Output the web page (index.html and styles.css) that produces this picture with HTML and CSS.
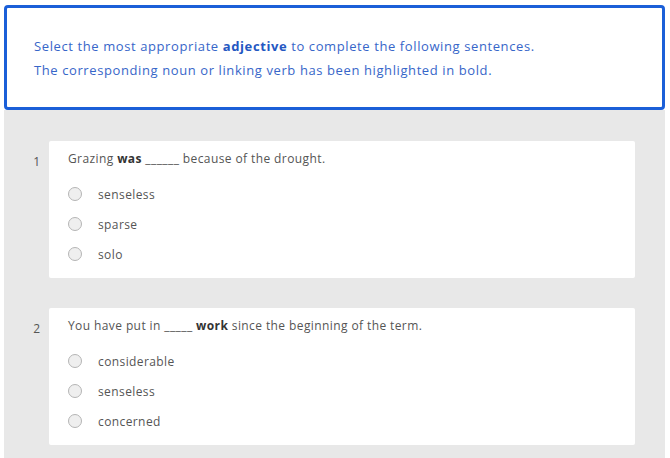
FILE: index.html
```html
<!DOCTYPE html>
<html>
<head>
<meta charset="utf-8">
<link rel="stylesheet" href="styles.css">
</head>
<body>
<div class="page">
  <div class="intro">
    <p>Select the most appropriate <b>adjective</b> to complete the following sentences.</p>
    <p>The corresponding noun or linking verb has been highlighted in bold.</p>
  </div>
  <div class="questions">
    <div class="question">
      <div class="num">1</div>
      <div class="card">
        <div class="stem">Grazing <b>was</b> ______ because of the drought.</div>
        <label class="option"><span class="radio"></span>senseless</label>
        <label class="option"><span class="radio"></span>sparse</label>
        <label class="option"><span class="radio"></span>solo</label>
      </div>
    </div>
    <div class="question">
      <div class="num">2</div>
      <div class="card">
        <div class="stem">You have put in _____ <b>work</b> since the beginning of the term.</div>
        <label class="option"><span class="radio"></span>considerable</label>
        <label class="option"><span class="radio"></span>senseless</label>
        <label class="option"><span class="radio"></span>concerned</label>
      </div>
    </div>
  </div>
</div>
</body>
</html>
```
FILE: styles.css
```css
html, body {
  margin: 0;
  padding: 0;
  background: #fff;
}
body {
  font-family: "Open Sans", "Liberation Sans", sans-serif;
}
.page {
  padding: 5px 5px 0 4px;
}
.intro {
  border: 3px solid #1b5fd8;
  border-radius: 4px;
  height: 105px;
  box-sizing: border-box;
  padding: 26px 0 0 27px;
  color: #3766c9;
  font-size: 13px;
  letter-spacing: 0.6px;
}
.intro p {
  margin: 0;
  line-height: 24px;
}
.intro b {
  color: #2457c2;
}
.questions {
  background: #e8e8e8;
  padding: 31px 30px 14px 0;
  display: flex;
  flex-direction: column;
  gap: 30px;
  height: 348px;
  box-sizing: border-box;
}
.question {
  display: flex;
}
.num {
  width: 36px;
  margin-right: 9px;
  flex: none;
  text-align: right;
  padding-top: 12px;
  font-size: 12px;
  color: #555;
}
.card {
  flex: 1;
  background: #fff;
  border-radius: 2px;
  padding: 9px 19px 10px 19px;
  height: 137px;
  box-sizing: border-box;
}
.stem {
  font-size: 12px;
  letter-spacing: 0.4px;
  color: #555;
  line-height: 17px;
}
.stem b {
  color: #333;
}
.option {
  display: flex;
  align-items: center;
  height: 30px;
  font-size: 12px;
  letter-spacing: 0.4px;
  color: #555;
}
.option:first-of-type {
  margin-top: 12px;
}
.radio {
  width: 12px;
  height: 12px;
  border: 1px solid #b5b5b5;
  border-radius: 50%;
  background: #efefef;
  margin-right: 16px;
  flex: none;
}
```
